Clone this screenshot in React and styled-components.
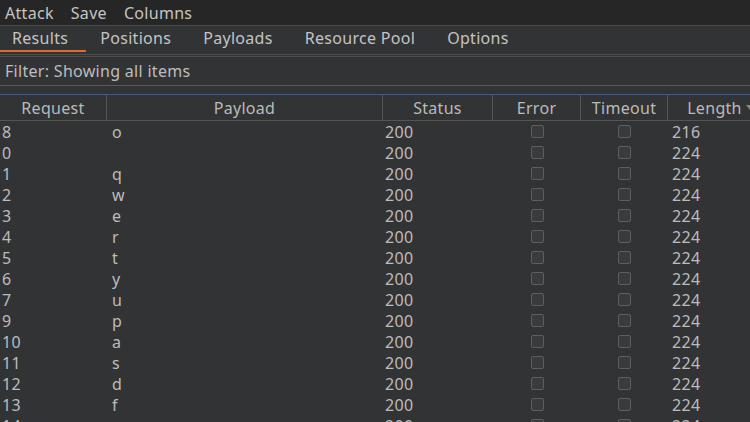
import React from "react";
import styled, { createGlobalStyle } from "styled-components";

const Global = createGlobalStyle`
  html, body { margin: 0; padding: 0; background: #323335; overflow: hidden; }
  body { font-family: "Noto Sans", "Open Sans", sans-serif; }
`;

const Page = styled.div`
  width: 750px;
  height: 422px;
  background: #323335;
  color: #bdbdbd;
  font-size: 16px;
  letter-spacing: 0.3px;
  overflow: hidden;
  display: flex;
  flex-direction: column;
`;

const MenuBar = styled.div`
  height: 25px;
  background: #262626;
  border-bottom: 1px solid #4a4a4a;
  display: flex;
  align-items: center;
  padding-left: 5px;
  gap: 17px;
  color: #c4c4c4;
  flex-shrink: 0;
`;

const TabBar = styled.div`
  height: 29px;
  display: flex;
  align-items: flex-start;
  border-bottom: 1px solid #4d4d4d;
  flex-shrink: 0;
  box-sizing: border-box;
`;

const Tab = styled.div`
  height: 26px;
  padding: 0 18px 0 12px;
  margin-right: 2px;
  display: flex;
  align-items: center;
  box-sizing: border-box;
  border-bottom: 2px solid ${(p) => (p.$active ? "#e06a2c" : "transparent")};
  color: #c4c4c4;
`;

const FilterBar = styled.div`
  margin-top: 1px;
  height: 30px;
  box-sizing: border-box;
  border-top: 1px solid #4d4d4d;
  border-bottom: 1px solid #5a5a5a;
  display: flex;
  align-items: center;
  padding-left: 5px;
  flex-shrink: 0;
`;

const TableWrap = styled.div`
  margin-top: 8px;
  border-top: 1px solid #4a5a7a;
  flex: 1;
`;

const Grid = styled.div`
  display: grid;
  grid-template-columns: 107px 276px 110px 88px 87px 106px;
  width: 774px;
`;

const HeadCell = styled.div`
  height: 26px;
  border-bottom: 1px solid #555;
  border-right: 1px solid #555;
  display: flex;
  align-items: center;
  justify-content: center;
  gap: 4px;
  color: #bababa;
  box-sizing: border-box;
  white-space: nowrap;
`;

const Cell = styled.div`
  height: 21px;
  display: flex;
  align-items: center;
  padding-left: ${(p) => p.$pad ?? 2}px;
  justify-content: ${(p) => (p.$center ? "center" : "flex-start")};
  color: #bcbcbc;
  white-space: nowrap;
`;

const Check = styled.span`
  width: 11px;
  height: 11px;
  border: 1px solid #5e5e5e;
  border-radius: 2px;
  background: #3a3b3d;
`;

const rows = [
  ["8", "o", "216"],
  ["0", "", "224"],
  ["1", "q", "224"],
  ["2", "w", "224"],
  ["3", "e", "224"],
  ["4", "r", "224"],
  ["5", "t", "224"],
  ["6", "y", "224"],
  ["7", "u", "224"],
  ["9", "p", "224"],
  ["10", "a", "224"],
  ["11", "s", "224"],
  ["12", "d", "224"],
  ["13", "f", "224"],
  ["14", "g", "224"],
];

export default function App() {
  return (
    <Page>
      <Global />
      <MenuBar>
        <span>Attack</span>
        <span>Save</span>
        <span>Columns</span>
      </MenuBar>
      <TabBar>
        <Tab $active>Results</Tab>
        <Tab>Positions</Tab>
        <Tab>Payloads</Tab>
        <Tab>Resource Pool</Tab>
        <Tab>Options</Tab>
      </TabBar>
      <FilterBar>Filter: Showing all items</FilterBar>
      <TableWrap>
        <Grid>
          <HeadCell>Request</HeadCell>
          <HeadCell>Payload</HeadCell>
          <HeadCell>Status</HeadCell>
          <HeadCell>Error</HeadCell>
          <HeadCell>Timeout</HeadCell>
          <HeadCell>
            Length
            <svg width="8" height="6" viewBox="0 0 8 6">
              <path d="M0 0 L8 0 L4 5 Z" fill="#8a8a8a" />
            </svg>
          </HeadCell>
          {rows.map(([r, p, l]) => (
            <React.Fragment key={r}>
              <Cell>{r}</Cell>
              <Cell $pad={5}>{p}</Cell>
              <Cell>{"200"}</Cell>
              <Cell $center $pad={0}><Check /></Cell>
              <Cell $center $pad={0}><Check /></Cell>
              <Cell $pad={4}>{l}</Cell>
            </React.Fragment>
          ))}
        </Grid>
      </TableWrap>
    </Page>
  );
}
